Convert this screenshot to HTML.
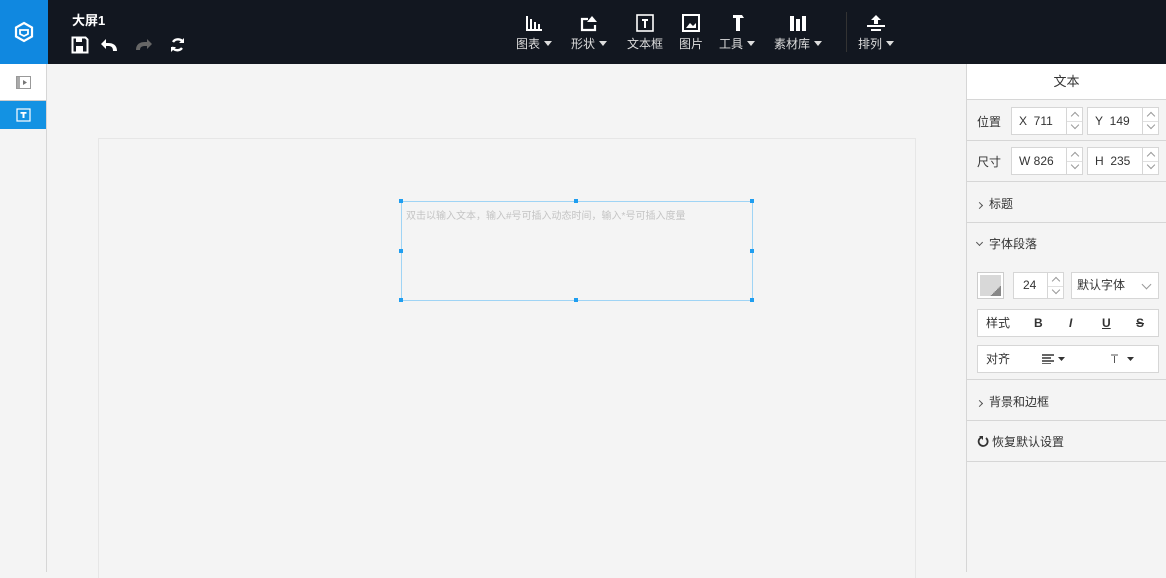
<!DOCTYPE html>
<html><head><meta charset="utf-8"><style>
*{margin:0;padding:0;box-sizing:border-box}
body{width:1166px;height:572px;overflow:hidden;background:#f4f4f4;font-family:"Liberation Sans","Noto Sans CJK SC",sans-serif;font-size:12px;color:#333;position:relative}
.top{position:absolute;left:0;top:0;width:1166px;height:64px;background:#121720}
.logo{position:absolute;left:0;top:0;width:48px;height:64px;background:#1088e0}
.title{position:absolute;left:72px;top:10px;color:#fff;font-size:13px;font-weight:bold}
.tb{position:absolute;top:14px;color:#fff;text-align:center;font-size:12px;color:#ddd}
.tb svg{display:block;margin:0 auto 3px}
.tri{display:inline-block;width:0;height:0;border-left:4px solid transparent;border-right:4px solid transparent;border-top:5px solid #ddd;margin-left:4px;vertical-align:2px}
.side{position:absolute;left:0;top:64px;width:47px;height:508px;background:#f4f4f4;border-right:1px solid #d6d6d6}
.canvas{position:absolute;left:98px;top:138px;width:818px;height:440px;border:1px solid #e6e6e6;border-bottom:none}
.sel{position:absolute;left:401px;top:201px;width:352px;height:100px;border:1px solid #9fd4f5}
.h{position:absolute;width:4px;height:4px;background:#1f9ef0}
.panel{position:absolute;left:966px;top:64px;width:200px;height:508px;background:#f4f4f4;border-left:1px solid #d6d6d6}
.row{border-bottom:1px solid #d6d6d6;position:relative}
.inp{position:absolute;background:#fff;border:1px solid #d6d6d6;height:28px;line-height:26px;font-size:12px;padding-left:7px}
.sp{position:absolute;right:0;top:0;width:16px;height:26px;border-left:1px solid #d6d6d6}
.sp:after{content:"";position:absolute;left:0;right:0;top:13px;border-top:1px solid #e0e0e0}
.sp i,.sp b{position:absolute;left:5px;width:6px;height:6px;border-left:1px solid #999;border-top:1px solid #999}
.sp i{top:5px;transform:rotate(45deg)}
.sp b{top:14px;transform:rotate(225deg)}
.lbl{position:absolute;left:10px;font-size:12px}
.chev{display:inline-block;width:5px;height:5px;border-right:1.3px solid #555;border-bottom:1.3px solid #555}
</style></head><body>
<div class="top"></div>
<div class="logo"><svg width="48" height="64" viewBox="0 0 48 64"><path d="M24 23l8 4.5v9L24 41l-8-4.5v-9z" fill="none" stroke="#fff" stroke-width="2.2"/><path d="M20 30h8v4l-4 2-4-2z" fill="none" stroke="#fff" stroke-width="1.8"/></svg></div>
<div class="title">大屏1</div>
<svg style="position:absolute;left:71px;top:36px" width="120" height="18" viewBox="0 0 120 18">
<path d="M1.5 1.5h13l2 2v13h-15z" fill="none" stroke="#fff" stroke-width="2"/><rect x="5" y="2" width="6" height="4" fill="#fff"/><rect x="5" y="10" width="7" height="6" fill="#fff"/>
<path d="M46 15c0-6-4-8-9-8h-2V3l-5 5 5 5V10h2c3 0 5 1 5 5z" fill="#fff"/>
<path d="M65 14c0-6 4-8 9-8h2V3l5 5-5 5V10h-2c-3 0-5 1-5 4z" fill="#666"/>
<path d="M112 6a6 6 0 0 0-10 0M101 11a6 6 0 0 0 10 1" fill="none" stroke="#fff" stroke-width="2.4"/><path d="M113 2v5h-5zM100 16v-5h5z" fill="#fff"/>
</svg>
<div class="tb" style="left:516px"><svg width="18" height="18"><path d="M2 2v14h15" stroke="#fff" stroke-width="2" fill="none"/><rect x="5" y="5" width="2" height="10" fill="#fff"/><rect x="9" y="8" width="2" height="7" fill="#fff"/><rect x="13" y="10" width="2" height="5" fill="#fff"/></svg>图表<span class="tri"></span></div>
<div class="tb" style="left:571px"><svg width="18" height="18"><path d="M8 5H2v11h13v-5" stroke="#fff" stroke-width="2.2" fill="none"/><path d="M12 2l5 6H7z" fill="#fff"/></svg>形状<span class="tri"></span></div>
<div class="tb" style="left:627px"><svg width="20" height="18"><rect x="2" y="1" width="16" height="16" stroke="#fff" stroke-width="1.6" fill="none"/><path d="M7 5h6v2h-2v7H9V7H7z" fill="#fff"/></svg>文本框</div>
<div class="tb" style="left:679px"><svg width="20" height="18"><rect x="2" y="1" width="16" height="16" stroke="#fff" stroke-width="2" fill="none"/><path d="M5 14l4-5 3 3 3-3v5z" fill="#fff"/></svg>图片</div>
<div class="tb" style="left:719px"><svg width="18" height="18"><path d="M5 1h9l2 3h-4v13H8V4H5z" fill="#fff"/></svg>工具<span class="tri"></span></div>
<div class="tb" style="left:774px"><svg width="20" height="18"><rect x="2" y="2" width="4" height="15" fill="#fff"/><rect x="8" y="5" width="4" height="12" fill="#fff"/><rect x="14" y="2" width="4" height="15" fill="#fff"/></svg>素材库<span class="tri"></span></div>
<div style="position:absolute;left:846px;top:12px;width:1px;height:40px;background:#333"></div>
<div class="tb" style="left:858px"><svg width="20" height="18"><path d="M10 1l5 5h-3v4H8V6H5z" fill="#fff"/><rect x="1" y="11" width="18" height="2" fill="#fff"/><rect x="5" y="15" width="10" height="2" fill="#fff"/></svg>排列<span class="tri"></span></div>
<div class="side">
<div style="height:37px;background:#fff;border-bottom:1px solid #ccc;position:relative"><svg style="position:absolute;left:16px;top:12px" width="16" height="14"><rect x="0.5" y="0.5" width="14" height="12" fill="none" stroke="#999"/><rect x="1" y="1" width="3" height="11" fill="#aaa"/><path d="M7 4l4 2.5L7 9z" fill="#777"/></svg></div>
<div style="height:28px;background:#1392e3;position:relative"><svg style="position:absolute;left:16px;top:7px" width="16" height="14"><rect x="1" y="1" width="13" height="12" fill="none" stroke="#fff" stroke-width="1.2"/><path d="M4.5 4h6v1.8H8.5V10H6.5V5.8h-2z" fill="#fff"/></svg></div>
</div>
<div class="canvas"></div>
<div class="sel"><div style="position:absolute;left:4px;top:5px;font-size:10px;color:#c4c4c4;white-space:nowrap">双击以输入文本，输入#号可插入动态时间，输入*号可插入度量</div></div>
<div class="h" style="left:399px;top:199px"></div><div class="h" style="left:574px;top:199px"></div><div class="h" style="left:750px;top:199px"></div>
<div class="h" style="left:399px;top:249px"></div><div class="h" style="left:750px;top:249px"></div>
<div class="h" style="left:399px;top:298px"></div><div class="h" style="left:574px;top:298px"></div><div class="h" style="left:750px;top:298px"></div>
<div class="panel">
<div class="row" style="height:36px;background:#fff;text-align:center;line-height:36px;font-size:13px">文本</div>
<div class="row" style="height:41px"><span class="lbl" style="top:13px">位置</span><div class="inp" style="left:44px;top:7px;width:72px">X&nbsp; 711<div class="sp"><i></i><b></b></div></div><div class="inp" style="left:120px;top:7px;width:72px">Y&nbsp; 149<div class="sp"><i></i><b></b></div></div></div>
<div class="row" style="height:41px"><span class="lbl" style="top:12px">尺寸</span><div class="inp" style="left:44px;top:6px;width:72px">W 826<div class="sp"><i></i><b></b></div></div><div class="inp" style="left:120px;top:6px;width:72px">H&nbsp; 235<div class="sp"><i></i><b></b></div></div></div>
<div class="row" style="height:41px"><span class="lbl" style="top:13px"><span class="chev" style="transform:rotate(-45deg);margin-right:7px"></span>标题</span></div>
<div class="row" style="height:157px"><span class="lbl" style="top:12px"><span class="chev" style="transform:rotate(45deg);margin-right:7px;vertical-align:3px"></span>字体段落</span>
<div style="position:absolute;left:10px;top:49px;width:27px;height:27px;border:1px solid #ccc;background:#fff;padding:2px"><div style="width:21px;height:21px;background:linear-gradient(135deg,#d8d8d8 75%,#888 75%)"></div></div>
<div class="inp" style="left:46px;top:49px;width:51px;height:27px;line-height:25px;padding-left:9px">24<div class="sp" style="height:25px"><i></i><b></b></div></div>
<div class="inp" style="left:104px;top:49px;width:88px;height:27px;line-height:25px;padding-left:5px">默认字体<span class="chev" style="position:absolute;right:8px;top:8px;transform:rotate(45deg);border-color:#999;width:7px;height:7px;border-width:1px"></span></div>
<div class="inp" style="left:10px;top:86px;width:182px;height:28px;padding-left:8px">样式<span style="position:absolute;left:56px;font-weight:bold">B</span><span style="position:absolute;left:91px;font-weight:bold;font-style:italic">I</span><span style="position:absolute;left:124px;font-weight:bold;text-decoration:underline">U</span><span style="position:absolute;left:158px;font-weight:bold;text-decoration:line-through">S</span></div>
<div class="inp" style="left:10px;top:122px;width:182px;height:28px;padding-left:8px">对齐<svg style="position:absolute;left:64px;top:8px" width="30" height="10"><path d="M0 1h12M0 4h9M0 7h12M0 10h9" stroke="#333" stroke-width="1.5"/><path d="M16 3h7l-3.5 4z" fill="#333"/></svg><svg style="position:absolute;left:133px;top:8px" width="30" height="10"><path d="M0 1h7M3.5 2v7" stroke="#555"/><path d="M16 3h7l-3.5 4z" fill="#333"/></svg></div>
</div>
<div class="row" style="height:41px"><span class="lbl" style="top:13px"><span class="chev" style="transform:rotate(-45deg);margin-right:7px"></span>背景和边框</span></div>
<div class="row" style="height:41px"><span class="lbl" style="top:12px"><svg width="12" height="12" style="vertical-align:-1px;margin-right:3px"><path d="M4 2.5A4.5 4.5 0 1 0 9 3" fill="none" stroke="#333" stroke-width="1.8"/><path d="M2 1h4v4z" fill="#333"/></svg>恢复默认设置</span></div>
</div>
</body></html>
